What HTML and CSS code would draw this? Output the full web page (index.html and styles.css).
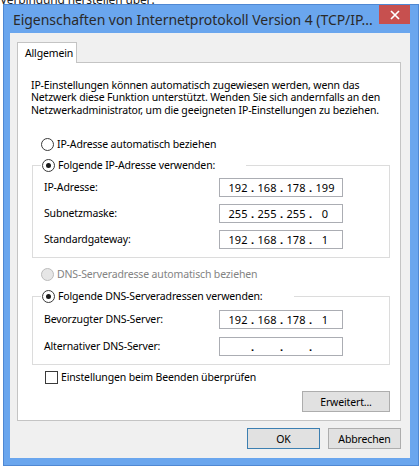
FILE: index.html
```html
<!DOCTYPE html>
<html lang="de">
<head>
<meta charset="utf-8">
<title>Eigenschaften von Internetprotokoll Version 4 (TCP/IPv4)</title>
<link rel="stylesheet" href="styles.css">
</head>
<body>
<div class="desktop">
  <div class="backdrop">Verbindung herstellen über:</div>
  <div class="window">
    <div class="titlebar">
      <div class="title">Eigenschaften von Internetprotokoll Version 4 (TCP/IP...</div>
      <div class="close">
        <svg width="10" height="10" viewBox="0 0 10 10"><path d="M1 1 L9 9 M9 1 L1 9" stroke="#fff" stroke-width="1.7" fill="none"/></svg>
      </div>
    </div>
    <div class="client">
      <div class="tabs">
        <div class="tab">Allgemein</div>
      </div>
      <div class="panel">
        <p class="intro">IP-Einstellungen können automatisch zugewiesen werden, wenn das Netzwerk diese Funktion unterstützt. Wenden Sie sich andernfalls an den Netzwerkadministrator, um die geeigneten IP-Einstellungen zu beziehen.</p>

        <div class="option option-auto">
          <span class="radio"></span><span>IP-Adresse automatisch beziehen</span>
        </div>

        <div class="group group-ip">
          <div class="legend legend-ip"><span class="radio checked"></span><span>Folgende IP-Adresse verwenden:</span></div>
          <div class="row">
            <span class="label">IP-Adresse:</span>
            <div class="ipfield"><span class="seg">192</span><span class="dot">.</span><span class="seg">168</span><span class="dot">.</span><span class="seg">178</span><span class="dot">.</span><span class="seg">199</span></div>
          </div>
          <div class="row">
            <span class="label">Subnetzmaske:</span>
            <div class="ipfield"><span class="seg">255</span><span class="dot">.</span><span class="seg">255</span><span class="dot">.</span><span class="seg">255</span><span class="dot">.</span><span class="seg">0</span></div>
          </div>
          <div class="row">
            <span class="label">Standardgateway:</span>
            <div class="ipfield"><span class="seg">192</span><span class="dot">.</span><span class="seg">168</span><span class="dot">.</span><span class="seg">178</span><span class="dot">.</span><span class="seg">1</span></div>
          </div>
        </div>

        <div class="option option-dns disabled">
          <span class="radio"></span><span>DNS-Serveradresse automatisch beziehen</span>
        </div>

        <div class="group group-dns">
          <div class="legend legend-dns"><span class="radio checked"></span><span>Folgende DNS-Serveradressen verwenden:</span></div>
          <div class="row">
            <span class="label">Bevorzugter DNS-Server:</span>
            <div class="ipfield"><span class="seg">192</span><span class="dot">.</span><span class="seg">168</span><span class="dot">.</span><span class="seg">178</span><span class="dot">.</span><span class="seg">1</span></div>
          </div>
          <div class="row">
            <span class="label">Alternativer DNS-Server:</span>
            <div class="ipfield"><span class="seg"></span><span class="dot">.</span><span class="seg"></span><span class="dot">.</span><span class="seg"></span><span class="dot">.</span><span class="seg"></span></div>
          </div>
        </div>

        <div class="check-row">
          <span class="checkbox"></span><span>Einstellungen beim Beenden überprüfen</span>
        </div>

        <div class="adv-row">
          <button class="btn btn-adv">Erweitert...</button>
        </div>
      </div>
      <div class="footer">
        <button class="btn btn-default">OK</button>
        <button class="btn">Abbrechen</button>
      </div>
    </div>
  </div>
</div>
</body>
</html>
```

FILE: styles.css
```css
html, body {
  margin: 0;
  padding: 0;
}
body {
  width: 420px;
  height: 470px;
  overflow: hidden;
  background: #ffffff;
  font-family: "Noto Sans", "Open Sans", sans-serif;
  font-size: 10.5px;
  letter-spacing: -0.15px;
  color: #000;
}
.desktop {
  position: relative;
  width: 420px;
  height: 470px;
  overflow: hidden;
  padding: 4px 0 0 3px;
  box-sizing: border-box;
}
.backdrop {
  position: absolute;
  left: 0;
  top: -9px;
  font-size: 12px;
  color: #222;
}
.window {
  position: relative;
  width: 416px;
  height: 462px;
  box-sizing: border-box;
  border: 1px solid #4f88d3;
  background: #6aa6ee;
  padding: 0 8px 7px 6px;
  display: flex;
  flex-direction: column;
}
.titlebar {
  height: 28px;
  display: flex;
  align-items: flex-start;
  justify-content: space-between;
}
.title {
  margin: 6px 0 0 3px;
  font-size: 14px;
  letter-spacing: -0.05px;
  line-height: 18px;
  color: #2a2a2a;
  white-space: nowrap;
}
.close {
  width: 31px;
  height: 19px;
  background: #c7504f;
  display: flex;
  align-items: center;
  justify-content: center;
}
.client {
  flex: 1;
  background: #f0f0f0;
  padding: 9px 9px 0 7px;
  display: flex;
  flex-direction: column;
}
.tabs {
  display: flex;
  height: 20px;
  position: relative;
  z-index: 1;
}
.tab {
  width: 60px;
  height: 21px;
  box-sizing: border-box;
  border: 1px solid #c4c4c4;
  border-bottom: none;
  background: #fff;
  padding: 3px 0 0 7px;
  line-height: 14px;
}
.panel {
  height: 359px;
  box-sizing: border-box;
  border: 1px solid #c4c4c4;
  background: #fff;
  padding: 16px 10px 0 14px;
  display: flex;
  flex-direction: column;
}
.intro {
  margin: 0 0 0 -1px;
  line-height: 12.4px;
}
.option {
  display: flex;
  align-items: center;
  margin: 21px 0 0 9px;
  height: 14px;
}
.option.disabled {
  color: #838383;
}
.option-dns {
  margin-top: 9px;
}
.radio {
  width: 13px;
  height: 13px;
  box-sizing: border-box;
  border: 1px solid #3a3a3a;
  border-radius: 50%;
  background: #fff;
  margin-right: 3px;
  display: flex;
  align-items: center;
  justify-content: center;
  flex: none;
}
.radio.checked::after {
  content: "";
  width: 5px;
  height: 5px;
  border-radius: 50%;
  background: #1a1a1a;
}
.disabled .radio {
  border-color: #bcbcbc;
  background: #e6e6e6;
}
.group {
  border: 1px solid #dcdcdc;
  margin-left: 0;
  margin-right: 0;
  padding: 0 0 8px 11px;
}
.group-ip {
  margin-top: 14px;
}
.group-dns {
  margin-top: 15px;
  padding-bottom: 8px;
}
.legend {
  display: flex;
  align-items: center;
  height: 14px;
  margin: -8px 0 0 -3px;
  padding-left: 1px;
  background: #fff;
  width: 204px;
}
.legend-dns {
  width: 252px;
}
.row {
  display: flex;
  align-items: center;
  height: 20px;
  margin-top: 6px;
}
.group .legend + .row {
  margin-top: 5px;
}
.group-dns .legend + .row {
  margin-top: 6px;
}
.group-dns .row {
  margin-top: 7px;
}
.label {
  width: 175px;
}
.ipfield {
  width: 124px;
  height: 19px;
  box-sizing: border-box;
  border: 1px solid #abadb3;
  background: #fff;
  display: flex;
  align-items: center;
  padding-left: 6px;
  font-size: 11px;
  letter-spacing: 0;
}
.seg {
  width: 24px;
  text-align: center;
}
.dot {
  width: 5px;
  text-align: center;
  font-weight: bold;
}
.check-row {
  display: flex;
  align-items: center;
  margin: 5px 0 0 13px;
  height: 14px;
}
.checkbox {
  width: 13px;
  height: 13px;
  box-sizing: border-box;
  border: 1px solid #3a3a3a;
  background: #fff;
  margin-right: 3px;
}
.adv-row {
  display: flex;
  justify-content: flex-end;
  margin-top: 7px;
}
.btn {
  font-family: inherit;
  font-size: 10.5px;
  letter-spacing: -0.15px;
  color: #000;
  background: #e1e1e1;
  border: 1px solid #adadad;
  border-radius: 0;
  height: 21px;
  width: 73px;
  padding: 0;
  margin: 0;
}
.btn-adv {
  width: 88px;
}
.btn-default {
  border-color: #3c7fb1;
}
.footer {
  display: flex;
  justify-content: flex-end;
  gap: 8px;
  margin-top: 7px;
  padding-right: 0;
}
```
